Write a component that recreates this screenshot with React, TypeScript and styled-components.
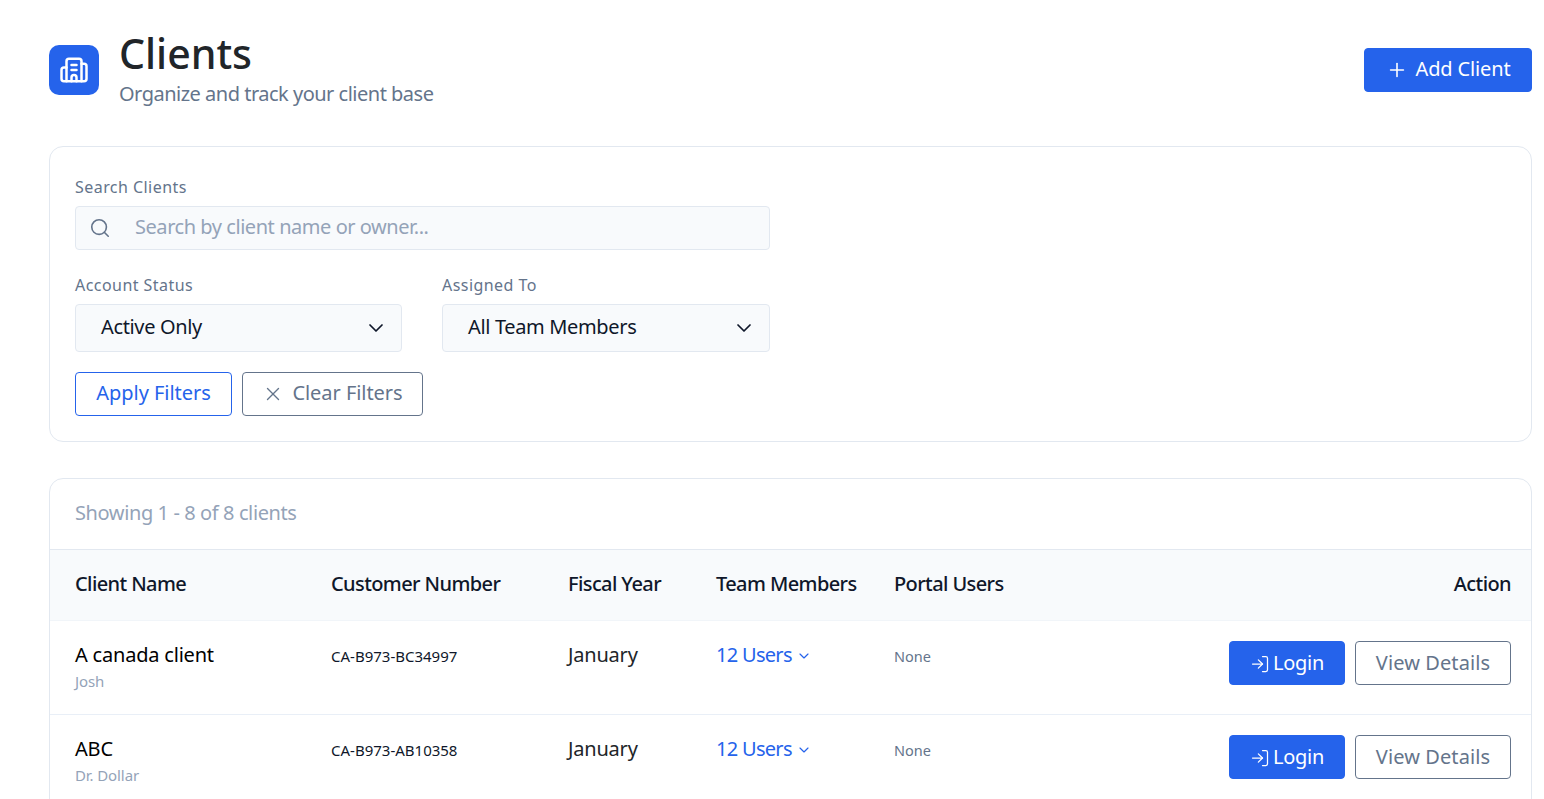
import React from 'react';
import styled, { createGlobalStyle } from 'styled-components';
import { Building2, ChevronDown, LogIn, Plus, Search, X } from 'lucide-react';

interface IClient {
  name: string;
  owner: string;
  customerNumber: string;
}

const clients: IClient[] = [
  { name: 'A canada client', owner: 'Josh', customerNumber: 'CA-B973-BC34997' },
  { name: 'ABC', owner: 'Dr. Dollar', customerNumber: 'CA-B973-AB10358' },
];

const App: React.FC = () => (
  <>
    <GlobalStyle />
    <Page>
      <Header>
        <TitleGroup>
          <IconBox>
            <Building2 size={30} strokeWidth={2} />
          </IconBox>
          <div>
            <Title>Clients</Title>
            <Subtitle>Organize and track your client base</Subtitle>
          </div>
        </TitleGroup>
        <AddButton>
          <Plus size={22} strokeWidth={1.75} />
          Add Client
        </AddButton>
      </Header>

      <FilterCard>
        <SearchField>
          <Label>Search Clients</Label>
          <SearchBox>
            <Search size={22} strokeWidth={1.75} color="#64748b" />
            <Placeholder>Search by client name or owner...</Placeholder>
          </SearchBox>
        </SearchField>
        <SelectRow>
          <div>
            <Label>Account Status</Label>
            <Select>
              Active Only
              <ChevronDown size={24} strokeWidth={1.75} />
            </Select>
          </div>
          <div>
            <Label>Assigned To</Label>
            <Select>
              All Team Members
              <ChevronDown size={24} strokeWidth={1.75} />
            </Select>
          </div>
        </SelectRow>
        <FilterActions>
          <ApplyButton>Apply Filters</ApplyButton>
          <ClearButton>
            <X size={22} strokeWidth={1.5} />
            Clear Filters
          </ClearButton>
        </FilterActions>
      </FilterCard>

      <TableCard>
        <Showing>Showing 1 - 8 of 8 clients</Showing>
        <HeadRow>
          <span>Client Name</span>
          <span>Customer Number</span>
          <span>Fiscal Year</span>
          <span>Team Members</span>
          <span>Portal Users</span>
          <ActionHead>Action</ActionHead>
        </HeadRow>
        {clients.map((client) => (
          <Row key={client.customerNumber}>
            <div>
              <ClientName>{client.name}</ClientName>
              <Owner>{client.owner}</Owner>
            </div>
            <Code>{client.customerNumber}</Code>
            <Cell>January</Cell>
            <UsersLink>
              12 Users
              <ChevronDown size={16} strokeWidth={1.75} />
            </UsersLink>
            <None>None</None>
            <RowActions>
              <LoginButton>
                <LogIn size={20} strokeWidth={1.5} />
                Login
              </LoginButton>
              <DetailsButton>View Details</DetailsButton>
            </RowActions>
          </Row>
        ))}
      </TableCard>
    </Page>
  </>
);

export default App;

const GlobalStyle = createGlobalStyle`
  html, body {
    margin: 0;
    height: 799px;
    overflow: hidden;
    background: #ffffff;
  }
  body {
    font-family: 'Noto Sans', 'Open Sans', sans-serif;
    color: #0f172a;
  }
  * {
    box-sizing: border-box;
  }
`;

const Page = styled.div`
  padding: 29px 12px 0 49px;
`;

const Header = styled.header`
  display: flex;
  justify-content: space-between;
  align-items: center;
  height: 82px;
  margin-bottom: 35px;
`;

const TitleGroup = styled.div`
  display: flex;
  align-items: center;
  gap: 20px;
`;

const IconBox = styled.div`
  width: 50px;
  height: 50px;
  border-radius: 10px;
  background: #2563eb;
  color: #ffffff;
  display: flex;
  align-items: center;
  justify-content: center;
`;

const Title = styled.h1`
  margin: 0 0 2px;
  font-size: 41px;
  line-height: 48px;
  font-weight: 500;
  color: #212529;
`;

const Subtitle = styled.p`
  margin: 0;
  padding-bottom: 2px;
  font-size: 20px;
  line-height: 30px;
  letter-spacing: -0.5px;
  color: #64748b;
`;

const BaseButton = styled.button`
  display: inline-flex;
  align-items: center;
  justify-content: center;
  height: 44px;
  padding: 0 0 3px;
  border-radius: 4px;
  font-family: inherit;
  font-size: 20px;
  letter-spacing: -0.05px;
  cursor: pointer;

  svg {
    margin-top: 3px;
  }
`;

const AddButton = styled(BaseButton)`
  width: 168px;
  gap: 8px;
  border: 1px solid #2563eb;
  background: #2563eb;
  color: #ffffff;
  letter-spacing: -0.15px;
`;

const FilterCard = styled.section`
  height: 296px;
  padding: 29px 24px 0 25px;
  border: 1px solid #e2e8f0;
  border-radius: 14px;
`;

const SearchField = styled.div`
  width: 695px;
`;

const Label = styled.div`
  height: 30px;
  font-size: 16px;
  line-height: 22px;
  letter-spacing: 0.45px;
  color: #64748b;
`;

const SearchBox = styled.div`
  display: flex;
  align-items: center;
  height: 44px;
  padding-left: 13px;
  gap: 24px;
  background: #f8fafc;
  border: 1px solid #e2e8f0;
  border-radius: 4px;
`;

const Placeholder = styled.span`
  padding-bottom: 3px;
  font-size: 20px;
  letter-spacing: -0.45px;
  color: #94a3b8;
`;

const SelectRow = styled.div`
  display: grid;
  grid-template-columns: 327px 328px;
  gap: 40px;
  margin-top: 24px;
`;

const Select = styled.div`
  display: flex;
  align-items: center;
  justify-content: space-between;
  height: 48px;
  padding: 0 13px 3px 25px;
  background: #f8fafc;
  border: 1px solid #e2e8f0;
  border-radius: 4px;
  font-size: 20px;
  letter-spacing: -0.35px;
  color: #0f172a;

  svg {
    margin-top: 3px;
  }
`;

const FilterActions = styled.div`
  display: flex;
  gap: 10px;
  margin-top: 20px;
`;

const ApplyButton = styled(BaseButton)`
  width: 157px;
  background: #ffffff;
  border: 1px solid #2563eb;
  color: #2563eb;
`;

const ClearButton = styled(BaseButton)`
  width: 181px;
  gap: 8px;
  background: #ffffff;
  border: 1px solid #64748b;
  color: #64748b;
`;

const TableCard = styled.section`
  margin-top: 36px;
  border: 1px solid #e2e8f0;
  border-radius: 14px 14px 0 0;
`;

const Showing = styled.div`
  height: 70px;
  padding-left: 25px;
  font-size: 20px;
  line-height: 68px;
  letter-spacing: -0.4px;
  color: #94a3b8;
`;

const columns = '256px 237px 148px 178px 1fr auto';

const HeadRow = styled.div`
  display: grid;
  grid-template-columns: ${columns};
  align-items: center;
  height: 72px;
  padding: 0 20px 4px 25px;
  background: #f8fafc;
  border-top: 1px solid #e2e8f0;
  border-bottom: 1px solid #f1f5f9;
  font-size: 20px;
  font-weight: 500;
  letter-spacing: -0.6px;
  color: #0f172a;
`;

const ActionHead = styled.span`
  text-align: right;
`;

const Row = styled.div`
  display: grid;
  grid-template-columns: ${columns};
  align-items: start;
  height: 94px;
  padding: 19px 20px 0 25px;
  border-bottom: 1px solid #e9eff7;
`;

const ClientName = styled.div`
  font-size: 20px;
  line-height: 30px;
  letter-spacing: -0.2px;
  color: #000000;
`;

const Owner = styled.div`
  margin-top: 1px;
  font-size: 15px;
  line-height: 21px;
  letter-spacing: -0.1px;
  color: #94a3b8;
`;

const Code = styled.div`
  font-size: 15px;
  line-height: 33px;
  color: #0f172a;
`;

const Cell = styled.div`
  font-size: 20px;
  line-height: 30px;
  letter-spacing: -0.2px;
  color: #212529;
`;

const UsersLink = styled.div`
  display: flex;
  align-items: center;
  gap: 4px;
  font-size: 20px;
  line-height: 30px;
  letter-spacing: -0.7px;
  color: #2563eb;

  svg {
    margin-top: 2px;
  }
`;

const None = styled.div`
  font-size: 14.5px;
  line-height: 33px;
  color: #64748b;
`;

const RowActions = styled.div`
  display: flex;
  gap: 10px;
  margin-top: 1px;
`;

const LoginButton = styled(BaseButton)`
  width: 116px;
  gap: 3px;
  padding-bottom: 2px;
  background: #2563eb;
  border: 1px solid #2563eb;
  color: #ffffff;
  letter-spacing: -0.3px;
`;

const DetailsButton = styled(BaseButton)`
  width: 156px;
  padding-bottom: 2px;
  background: #ffffff;
  border: 1px solid #64748b;
  color: #64748b;
  letter-spacing: 0.1px;
`;
